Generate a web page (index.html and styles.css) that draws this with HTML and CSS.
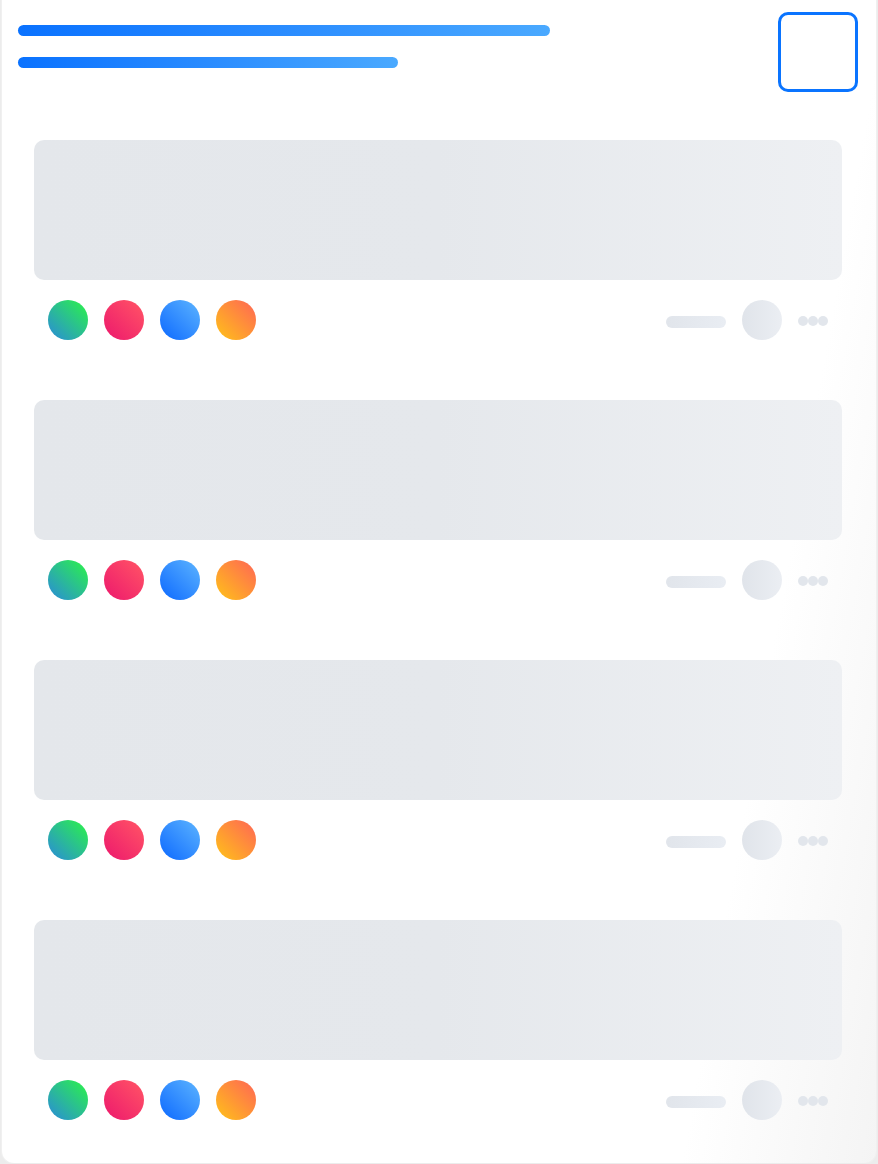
FILE: index.html
```html
<!DOCTYPE html>
<html>
<head>
<meta charset="utf-8">
<link rel="stylesheet" href="styles.css">
</head>
<body>
<div class="card">
  <div class="header">
    <div class="lines">
      <div class="line line-long"></div>
      <div class="line line-short"></div>
    </div>
    <div class="square"></div>
  </div>
  <div class="list">
    <div class="item">
      <div class="block"></div>
      <div class="row">
        <div class="dots-color">
          <span class="c c-green"></span><span class="c c-red"></span><span class="c c-blue"></span><span class="c c-orange"></span>
        </div>
        <div class="meta">
          <span class="pill"></span><span class="avatar"></span>
          <span class="more"><i></i><i></i><i></i></span>
        </div>
      </div>
    </div>
    <div class="item">
      <div class="block"></div>
      <div class="row">
        <div class="dots-color">
          <span class="c c-green"></span><span class="c c-red"></span><span class="c c-blue"></span><span class="c c-orange"></span>
        </div>
        <div class="meta">
          <span class="pill"></span><span class="avatar"></span>
          <span class="more"><i></i><i></i><i></i></span>
        </div>
      </div>
    </div>
    <div class="item">
      <div class="block"></div>
      <div class="row">
        <div class="dots-color">
          <span class="c c-green"></span><span class="c c-red"></span><span class="c c-blue"></span><span class="c c-orange"></span>
        </div>
        <div class="meta">
          <span class="pill"></span><span class="avatar"></span>
          <span class="more"><i></i><i></i><i></i></span>
        </div>
      </div>
    </div>
    <div class="item">
      <div class="block"></div>
      <div class="row">
        <div class="dots-color">
          <span class="c c-green"></span><span class="c c-red"></span><span class="c c-blue"></span><span class="c c-orange"></span>
        </div>
        <div class="meta">
          <span class="pill"></span><span class="avatar"></span>
          <span class="more"><i></i><i></i><i></i></span>
        </div>
      </div>
    </div>
  </div>
</div>
</body>
</html>
```
FILE: styles.css
```css
html, body {
  margin: 0;
  padding: 0;
  background: #ececec;
  font-family: "Liberation Sans", Arial, sans-serif;
}
.card {
  box-sizing: border-box;
  width: 874px;
  height: 1163px;
  margin-left: 2px;
  background: linear-gradient(100deg, #ffffff 0%, #ffffff 82%, #f4f4f4 100%);
  border-radius: 0 0 12px 12px;
  box-shadow: 0 0 0 1px #f0f0f0;
  padding: 12px 18px 0 16px;
}
.header {
  display: flex;
  justify-content: space-between;
  align-items: flex-start;
}
.lines {
  padding-top: 13px;
  display: flex;
  flex-direction: column;
  gap: 21px;
}
.line {
  height: 11px;
  border-radius: 6px;
  background: linear-gradient(90deg, #0a72ff 0%, #2a8cff 50%, #4aa9ff 100%);
}
.line-long { width: 532px; }
.line-short { width: 380px; }
.square {
  box-sizing: border-box;
  width: 80px;
  height: 80px;
  border: 3px solid #0a74ff;
  border-radius: 10px;
  background: transparent;
}
.list {
  margin-top: 48px;
  padding: 0 16px;
  display: flex;
  flex-direction: column;
  gap: 60px;
}
.block {
  height: 140px;
  border-radius: 10px;
  background: linear-gradient(90deg, #e4e7eb 0%, #e5e8ec 50%, #eef0f3 100%);
}
.row {
  margin-top: 20px;
  padding: 0 14px;
  height: 40px;
  display: flex;
  align-items: center;
  justify-content: space-between;
}
.dots-color {
  display: flex;
  gap: 16px;
}
.c {
  display: block;
  width: 40px;
  height: 40px;
  border-radius: 50%;
}
.c-green { background: linear-gradient(45deg, #2a94cc 10%, #2bea55 90%); }
.c-red { background: linear-gradient(45deg, #ee1e6c 10%, #ff4f66 90%); }
.c-blue { background: linear-gradient(45deg, #1470ff 10%, #55adff 90%); }
.c-orange { background: linear-gradient(45deg, #ffb91e 10%, #ff6e50 90%); }
.meta {
  display: flex;
  align-items: center;
}
.pill {
  display: block;
  width: 60px;
  height: 12px;
  margin-top: 4px;
  border-radius: 6px;
  background: linear-gradient(90deg, #e1e5eb, #e9edf3);
}
.avatar {
  display: block;
  width: 40px;
  height: 40px;
  border-radius: 50%;
  margin-left: 16px;
  background: linear-gradient(90deg, #e0e4ea, #ebeef3);
}
.more {
  display: flex;
  margin-left: 16px;
  margin-top: 2px;
}
.more i {
  display: block;
  width: 10px;
  height: 10px;
  border-radius: 50%;
  background: #e2e6ec;
}
```
